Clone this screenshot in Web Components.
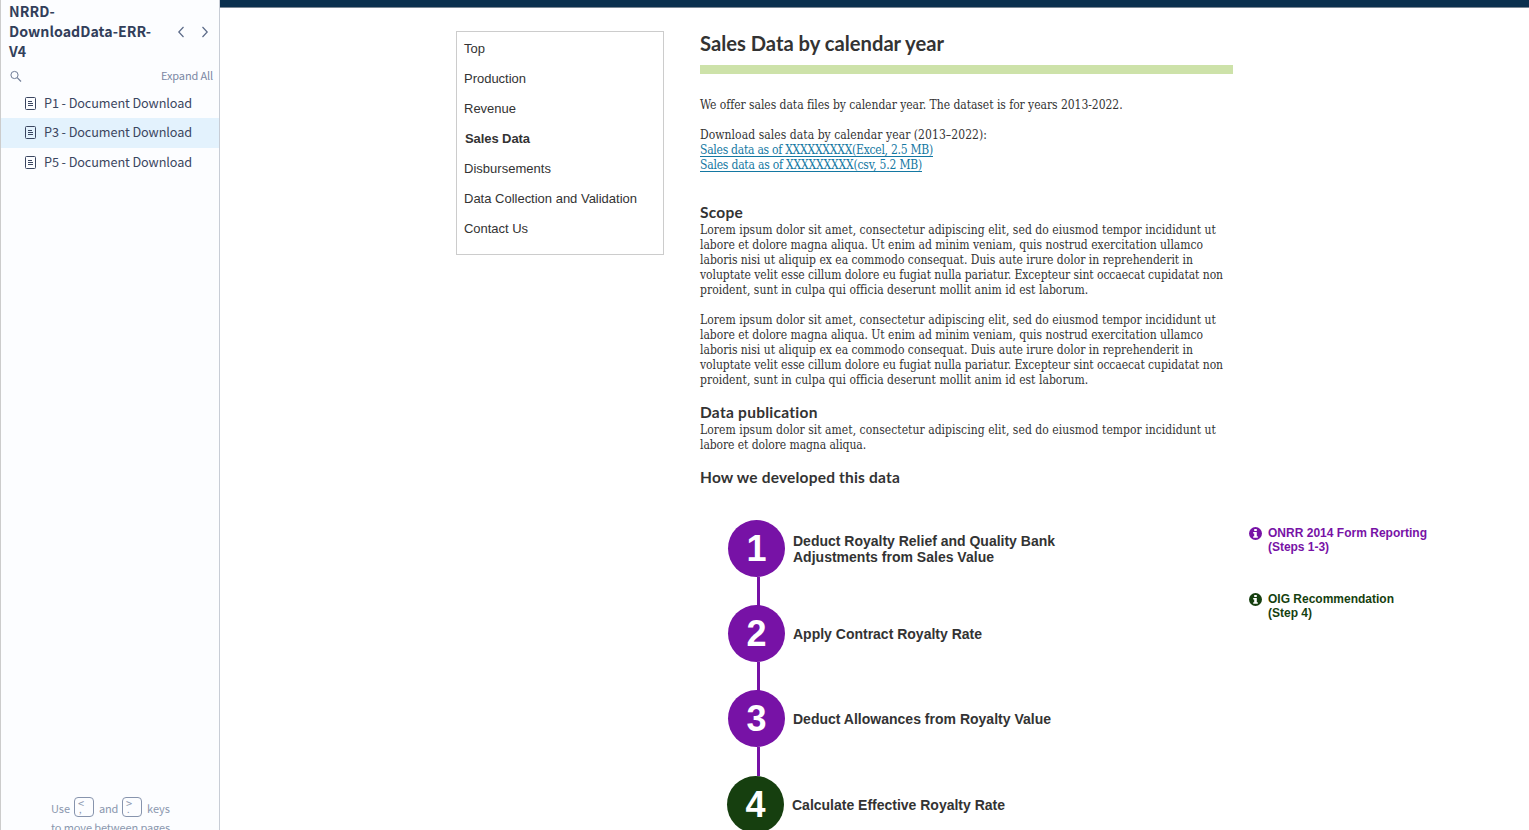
<!DOCTYPE html>
<html lang="en">
<head>
<meta charset="utf-8">
<title>NRRD-DownloadData-ERR-V4</title>
<style>
html,body{margin:0;height:100%;overflow:hidden;background:#fff}
</style>
</head>
<body>
<app-shell></app-shell>
<script>
const define = (name, html, setup) => {
  const t = document.createElement('template');
  t.innerHTML = html;
  customElements.define(name, class extends HTMLElement {
    connectedCallback() {
      if (this.shadowRoot) return;
      this.attachShadow({mode: 'open'}).append(t.content.cloneNode(true));
      if (setup) setup(this, this.shadowRoot);
    }
  });
};

/* One line of text, tracked so that it takes up the width given in "w". */
define('fit-text', `<style>:host{display:block;white-space:nowrap;width:max-content}</style><slot></slot>`, el => {
  const w = parseFloat(el.getAttribute('w'));
  el.style.letterSpacing = '0px';
  const natural = el.getBoundingClientRect().width;
  if (w && natural) el.style.letterSpacing = ((w - natural) / el.textContent.length).toFixed(4) + 'px';
});

define('page-item', `<style>
:host{display:flex;align-items:center;height:30px;padding-left:23px;font-size:12.7px;line-height:20px;color:#3b4660}
:host([active]){background:#e3f2fd;box-sizing:border-box;padding-bottom:2px}
svg{width:13px;height:13px;margin-right:7px;flex:none}
slot{display:block;margin-top:-1px}
</style>
<svg viewBox="0 0 13 13"><rect x="1.5" y=".5" width="10" height="12" rx="1" fill="none" stroke="#3b4660"/><path d="M4 4.5h4M4 6.5h5M4 8.5h5" stroke="#3b4660" fill="none"/></svg><slot></slot>`);

define('key-cap', `<style>
:host{display:flex;flex-direction:column;box-sizing:border-box;width:20px;height:20px;border:1px solid #8794ad;border-radius:4px;padding:1px 0 0 3px;font-size:11px;line-height:9px}
::slotted(span){font-size:9px;line-height:4px;padding-left:1px}
</style><slot></slot><slot name="low"></slot>`);

define('page-sidebar', `<style>
:host{display:flex;flex-direction:column;box-sizing:border-box;width:220px;height:830px;background:#fcfdff;border-left:1px solid #ccc;border-right:1px solid #c8cdd6;font-family:"Noto Sans CJK SC","Noto Sans",sans-serif;flex:none;overflow:hidden}
header{display:flex;align-items:center;height:60px;margin-top:1px;padding-left:8px;color:#323f5b;font-weight:700;font-size:14.2px;line-height:20px}
.title{width:166px}
.arrows{width:34px;height:12px;margin-top:1px}
.tools{display:flex;align-items:center;height:28px;padding:0 6px 0 8px;justify-content:space-between;color:#7b88a4;font-size:11px;line-height:16px}
.tools svg{width:13px;height:13px;margin-top:2px}
footer{margin-top:auto;height:35px;margin-left:50px;color:#8a97ae;font-size:11px;line-height:18px}
.row{display:flex;align-items:center;height:23px}
.row fit-text{padding-top:2px}
.row key-cap{margin:0 5px 0 4px}
</style>
<header><div class="title"><fit-text w="46">NRRD-</fit-text><fit-text w="142">DownloadData-ERR-</fit-text><fit-text w="17">V4</fit-text></div>
<svg class="arrows" viewBox="0 0 34 12" fill="none" stroke="#5b6a88" stroke-width="1.2"><path d="M8.5 1 3.8 6l4.7 5M27.5 1l4.7 5-4.7 5"/></svg></header>
<div class="tools"><svg viewBox="0 0 13 13" fill="none" stroke="#6f7c96"><circle cx="5.5" cy="5" r="3.6"/><path d="M8.2 7.7 12 11.5" stroke-width="1.2"/></svg><fit-text w="52">Expand All</fit-text></div>
<nav>
<page-item style="height:29px"><fit-text w="148">P1 - Document Download</fit-text></page-item>
<page-item active><fit-text w="148">P3 - Document Download</fit-text></page-item>
<page-item style="height:29px"><fit-text w="148">P5 - Document Download</fit-text></page-item>
</nav>
<footer><div class="row"><fit-text w="19">Use</fit-text><key-cap>&lt;<span slot="low">,</span></key-cap><fit-text w="19">and</fit-text><key-cap>&gt;<span slot="low">.</span></key-cap><fit-text w="23">keys</fit-text></div><fit-text w="119">to move between pages</fit-text></footer>`);

define('section-menu', `<style>
:host{display:block;box-sizing:border-box;width:208px;height:224px;border:1px solid #ccc;padding:2px 0 0 7px;font:13px/30px "Liberation Sans",Arial,sans-serif;color:#333;flex:none}
b{display:block;padding-left:1px}
</style>
<fit-text w="21">Top</fit-text><fit-text w="62">Production</fit-text><fit-text w="52">Revenue</fit-text><b><fit-text w="65">Sales Data</fit-text></b><fit-text w="87">Disbursements</fit-text><fit-text w="173">Data Collection and Validation</fit-text><fit-text w="64">Contact Us</fit-text>`);

define('section-heading', `<style>
:host{display:block;font:700 15.5px/20px Lato,sans-serif;color:#333;height:20px}
</style><slot></slot>`);

define('body-text', `<style>
:host{display:block;font-family:"DejaVu Serif Condensed","DejaVu Serif",serif;font-stretch:condensed;font-size:12px;line-height:15px;color:#333}
:host([link]){color:#1478a2}
:host([link]) ::slotted(fit-text){text-decoration:underline;text-underline-offset:2px;text-decoration-thickness:1px;text-decoration-skip-ink:none}
</style><slot></slot>`);

define('lorem-text', `<style>:host{display:block}</style><body-text>
<fit-text w="516">Lorem ipsum dolor sit amet, consectetur adipiscing elit, sed do eiusmod tempor incididunt ut</fit-text>
<fit-text w="503">labore et dolore magna aliqua. Ut enim ad minim veniam, quis nostrud exercitation ullamco</fit-text>
<fit-text w="493">laboris nisi ut aliquip ex ea commodo consequat. Duis aute irure dolor in reprehenderit in</fit-text>
<fit-text w="523">voluptate velit esse cillum dolore eu fugiat nulla pariatur. Excepteur sint occaecat cupidatat non</fit-text>
<fit-text w="388">proident, sunt in culpa qui officia deserunt mollit anim id est laborum.</fit-text></body-text>`);

define('flow-step', `<style>
:host{display:grid;grid-template-columns:57px auto;grid-template-rows:57px 28px;column-gap:8px;align-items:center;--tone:#7712a6;--line:29px;color:#333;font:700 14px/16px "Liberation Sans",Arial,sans-serif;height:85px}
.dot{width:57px;height:57px;border-radius:50%;background:var(--tone);color:#fff;font-size:36px;line-height:57px;text-align:center}
.line{width:3px;height:29px;background:#7712a6;margin-left:var(--line)}
:host([last]) .line{display:none}
</style><div class="dot"></div><div><slot></slot></div><div class="line"></div>`, (el, r) => {
  r.querySelector('.dot').textContent = el.getAttribute('n');
});

define('info-note', `<style>
:host{display:flex;font:700 12px/14px "Liberation Sans",Arial,sans-serif;height:66px}
svg{width:13px;height:13px;margin:1px 6px 0 0;flex:none}
</style><svg viewBox="0 0 13 13"><circle cx="6.5" cy="6.5" r="6.5" fill="currentColor"/><path d="M5.2 2h2.6v2.1H5.2zM4.2 5.1h3.6v4.1h1v1.5H4.2V9.2h1V6.6h-1z" fill="#fff"/></svg><div><slot></slot></div>`);

define('data-article', `<style>
:host{display:block;width:533px;flex:none}
h1{margin:-1px 0 0;height:35px;font:700 20.2px/26px Lato,sans-serif;color:#333}
.rule{height:9px;background:#cde2a9}
.steps{margin:33px 0 0 28px}
</style>
<h1><fit-text w="244">Sales Data by calendar year</fit-text></h1>
<div class="rule"></div>
<body-text style="margin-top:24px"><fit-text w="422">We offer sales data files by calendar year. The dataset is for years 2013-2022.</fit-text></body-text>
<body-text style="margin-top:15px"><fit-text w="287">Download sales data by calendar year (2013–2022):</fit-text></body-text>
<body-text link><fit-text w="233">Sales data as of XXXXXXXXX(Excel, 2.5 MB)</fit-text><fit-text w="222">Sales data as of XXXXXXXXX(csv, 5.2 MB)</fit-text></body-text>
<section-heading style="margin-top:29px"><fit-text w="43">Scope</fit-text></section-heading>
<lorem-text style="margin-top:1px"></lorem-text>
<lorem-text style="margin-top:15px"></lorem-text>
<section-heading style="margin-top:14px"><fit-text w="118">Data publication</fit-text></section-heading>
<body-text style="margin-top:1px"><fit-text w="516">Lorem ipsum dolor sit amet, consectetur adipiscing elit, sed do eiusmod tempor incididunt ut</fit-text><fit-text w="166">labore et dolore magna aliqua.</fit-text></body-text>
<section-heading style="margin-top:14px"><fit-text w="200">How we developed this data</fit-text></section-heading>
<div class="steps">
<flow-step n="1" style="--line:28.5px"><fit-text w="262">Deduct Royalty Relief and Quality Bank</fit-text><fit-text w="201">Adjustments from Sales Value</fit-text></flow-step>
<flow-step n="2" style="--line:29.4px"><fit-text w="189">Apply Contract Royalty Rate</fit-text></flow-step>
<flow-step n="3" style="--line:29.4px"><fit-text w="258">Deduct Allowances from Royalty Value</fit-text></flow-step>
<flow-step n="4" last style="--tone:#163f0f;margin:1px 0 0 -1px"><fit-text w="213">Calculate Effective Royalty Rate</fit-text></flow-step>
</div>`);

define('app-shell', `<style>
:host{display:flex;height:830px;overflow:hidden}
main{flex:1;min-width:0;height:830px;overflow:hidden}
.bar{height:7px;background:#0b304e;border-bottom:1px solid #7b8794}
.cols{display:flex;align-items:flex-start;padding:23px 0 0 236px}
data-article{margin-left:36px}
.notes{margin:495px 0 0 16px}
</style>
<page-sidebar></page-sidebar>
<main><div class="bar"></div><div class="cols"><section-menu></section-menu><data-article></data-article>
<div class="notes"><info-note style="color:#7712a6"><fit-text w="159">ONRR 2014 Form Reporting</fit-text><fit-text w="61">(Steps 1-3)</fit-text></info-note>
<info-note style="color:#163f0f"><fit-text w="126">OIG Recommendation</fit-text><fit-text w="44">(Step 4)</fit-text></info-note></div></div></main>`);
</script>
</body>
</html>
